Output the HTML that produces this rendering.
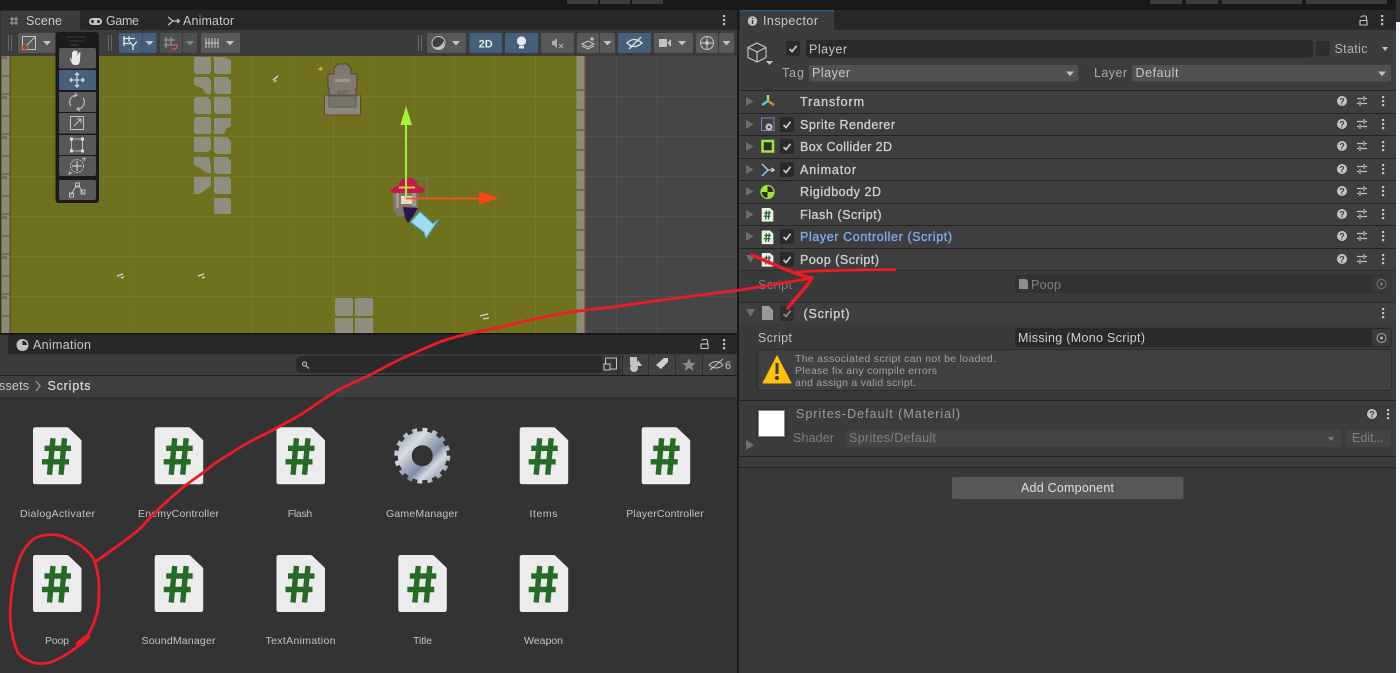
<!DOCTYPE html>
<html><head><meta charset="utf-8"><title>Unity Editor</title>
<style>
html,body{margin:0;padding:0;background:#333;width:1400px;height:673px;overflow:hidden}
svg{display:block}
text{font-family:"Liberation Sans",sans-serif;font-size:12.5px;fill:#c8c8c8}
.b{fill:#d0d0d0;stroke:#d0d0d0;stroke-width:.3px;font-size:12.5px}
.s{font-size:10.5px;fill:#c4c4c4;text-anchor:middle}
.d{fill:#8e8e8e}
</style></head><body>
<svg width="1400" height="673" viewBox="0 0 1400 673" xmlns="http://www.w3.org/2000/svg">
<defs>
<g id="file"><path d="M2.500 0H33.500Q35 0 36 1L47.500 12Q48.500 13 48.500 14V54.500Q48.500 57 46 57H2.500Q0 57 0 54.500V2.500Q0 0 2.500 0Z" fill="#ececec"/><path d="M20 11L16.500 47.500M31.500 11L28 47.500M11.500 21H38M9 34.500H36" stroke="#256b27" stroke-width="5.400" fill="none"/></g>
<g id="tri"><path d="M0 .5L7.500 5L0 9.500Z" fill="#6e6e6e"/></g>
<g id="chk"><rect x="0" y="0" width="14" height="15" rx="2" fill="#2a2a2a"/><path d="M3.500 8L6 10.500L10.500 4.800" stroke="#c6c6c6" stroke-width="1.800" fill="none"/></g>
<g id="q"><circle cx="5" cy="5" r="5" fill="#c4c4c4"/><text x="5" y="8.500" style="font-size:9px;font-weight:bold;fill:#3c3c3c;text-anchor:middle">?</text></g>
<g id="sl"><path d="M0 2.500H6M8 2.500H10M0 7.500H2M4 7.500H10M7 0V5M3 5V10" stroke="#c4c4c4" stroke-width="1.200" fill="none"/></g>
<g id="dots"><rect x="0" y="0" width="2.200" height="2.200" fill="#c4c4c4"/><rect x="0" y="4" width="2.200" height="2.200" fill="#c4c4c4"/><rect x="0" y="8" width="2.200" height="2.200" fill="#c4c4c4"/></g>
<g id="dn"><path d="M0 0H8L4 4.500Z" fill="#c4c4c4"/></g>
<g id="lock"><path d="M1 5.500V10H8V5.500ZM1.500 5.500H8M2 2.500Q2 1 4 1H6Q7.500 1 7.500 2.500V5.500" stroke="#c4c4c4" stroke-width="1.100" fill="none"/></g>
<g id="wall"><rect x="0" y="0" width="8" height="40" fill="#8b8a79"/><rect x="7.500" y="0" width="1.500" height="40" fill="#6e4a30"/><path d="M0 20H8M0 38H8" stroke="#6b5a49" stroke-width="1.200"/><rect x="0" y="0" width="5" height="3" fill="#6e6e5e"/></g>
<pattern id="grass" width="40" height="40" patternUnits="userSpaceOnUse" x="0" y="56"><path d="M38 8L41 13L43.500 8.500M18 30L19 34M6 22L7 25" stroke="#65671b" stroke-width="1.200" fill="none"/><path d="M37 8L39 10M44 7L43 9" stroke="#7b7d2a" stroke-width="1" fill="none"/></pattern>
<linearGradient id="steel" x1="0" y1="0" x2="1" y2="1"><stop offset="0" stop-color="#8c9ab0"/><stop offset=".3" stop-color="#d8dde4"/><stop offset=".45" stop-color="#a5afbf"/><stop offset=".6" stop-color="#7f8da5"/><stop offset=".72" stop-color="#d3d8df"/><stop offset="1" stop-color="#75849c"/></linearGradient>
</defs>

<rect width="1400" height="673" fill="#333"/>
<rect width="1400" height="10" fill="#191919"/>
<rect x="567" y="0" width="31" height="4" fill="#3c3c3c"/><rect x="600" y="0" width="30" height="4" fill="#3c3c3c"/><rect x="632" y="0" width="31" height="4" fill="#3c3c3c"/>
<rect x="1150" y="0" width="32" height="4" fill="#3c3c3c"/><rect x="1186" y="0" width="32" height="4" fill="#3c3c3c"/><rect x="1222" y="0" width="80" height="4" fill="#3c3c3c"/><rect x="1306" y="0" width="81" height="4" fill="#3c3c3c"/>

<!-- scene panel -->
<rect x="1" y="10" width="736" height="20" fill="#282828"/>
<path d="M1 30V13Q1 11 3 11H80V30Z" fill="#3c3c3c"/>
<rect x="1" y="30" width="736" height="26" fill="#3c3c3c"/>
<path d="M12 17V25M16 17V25M10 19H18M10 23H18" stroke="#a8a8a8" stroke-width="1" fill="none"/>
<text x="26" y="25" textLength="36">Scene</text>
<rect x="89" y="18" width="13" height="7" rx="3.500" fill="#c4c4c4"/><circle cx="92.500" cy="21.500" r="1.500" fill="#282828"/><circle cx="98.500" cy="21.500" r="1.500" fill="#282828"/>
<text x="106" y="25" textLength="33">Game</text>
<path d="M168 17L173 21H179M168 25L173 21M177 19L179.500 21L177 23" stroke="#c4c4c4" stroke-width="1.200" fill="none"/>
<text x="183" y="25" textLength="51">Animator</text>
<use href="#dots" x="723" y="15"/>

<!-- toolbar -->
<g fill="#585858">
<rect x="8" y="35" width="1" height="16" fill="#666"/><rect x="11" y="35" width="1" height="16" fill="#666"/>
<rect x="18" y="33" width="38" height="20" rx="2"/>
<rect x="108" y="35" width="1" height="16" fill="#666"/><rect x="111" y="35" width="1" height="16" fill="#666"/>
<rect x="119" y="33" width="23" height="20" rx="2" fill="#46607c"/><rect x="142.500" y="33" width="14" height="20" rx="2" fill="#46607c"/>
<rect x="160" y="33" width="22" height="20" rx="2" fill="#4f4f4f"/><rect x="183" y="33" width="14" height="20" rx="2" fill="#4f4f4f"/>
<rect x="201" y="33" width="39" height="20" rx="2"/>
<rect x="418" y="35" width="1" height="16" fill="#666"/><rect x="421" y="35" width="1" height="16" fill="#666"/>
<rect x="427" y="33" width="39" height="20" rx="2"/>
<rect x="469.500" y="33" width="32.500" height="20" rx="2" fill="#46607c"/>
<rect x="505" y="33" width="33" height="20" rx="2" fill="#46607c"/>
<rect x="541" y="33" width="33" height="20" rx="2"/>
<rect x="577" y="33" width="22" height="20" rx="2"/><rect x="600" y="33" width="15" height="20" rx="2"/>
<rect x="618" y="33" width="33" height="20" rx="2" fill="#46607c"/>
<rect x="654" y="33" width="39" height="20" rx="2"/>
<rect x="696" y="33" width="22" height="20" rx="2"/><rect x="719" y="33" width="15" height="20" rx="2"/>
</g>
<rect x="22.500" y="36.500" width="13" height="13" fill="none" stroke="#c4c4c4"/><path d="M24 48L35 37" stroke="#c4c4c4"/><circle cx="25" cy="47" r="2.800" fill="#585858" stroke="#e0603a" stroke-width="1.100"/>
<use href="#dn" x="43" y="41"/>
<path d="M124 36V46M129 36V42M123 38.500H135M123 43.500H130M130 42L133 46L137 41.500M133 46V50" stroke="#e6e6e6" stroke-width="1.300" fill="none"/>
<use href="#dn" x="145.500" y="41"/>
<path d="M166 37V48M171 37V46M164 40H175M164 45H170" stroke="#a5a5a5" stroke-width="1" fill="none"/><path d="M172 45H177Q178 48 175 49H172" stroke="#d2683a" stroke-width="1.300" fill="none"/>
<use href="#dn" x="186" y="41" opacity=".5"/>
<path d="M206 38V48M209 38V48M212 38V48M215 38V48M218 38V48M205 43H219" stroke="#c4c4c4" stroke-width="1" fill="none"/>
<use href="#dn" x="226" y="41"/>
<circle cx="438.500" cy="43" r="6.500" fill="#3f3f3f" stroke="#c4c4c4"/><path d="M433 46Q439 50 444 41Q445 49 438 49.500Q434 49 433 46Z" fill="#c4c4c4"/>
<use href="#dn" x="452" y="41"/>
<text x="485.700" y="47.500" style="font-size:11px;font-weight:bold;fill:#e6e6e6;text-anchor:middle">2D</text>
<circle cx="521.500" cy="41" r="4.600" fill="#e8e8e8"/><rect x="519" y="46" width="5" height="2.500" fill="#e8e8e8"/>
<path d="M552 41H554L557 38V48L554 45H552Z" fill="#b0b0b0"/><path d="M559 44L563 48M563 44L559 48" stroke="#b0b0b0"/>
<path d="M582 44L588 41L594 44L588 47Z M582 46L588 49L594 46" stroke="#c4c4c4" fill="none"/><path d="M592 37V41M590 39H594" stroke="#e0e0e0"/>
<use href="#dn" x="603.500" y="41"/>
<path d="M627 43Q634 36 642 43Q634 50 627 43Z" fill="none" stroke="#e6e6e6" stroke-width="1.300"/><path d="M629 49L641 37" stroke="#e6e6e6" stroke-width="1.300"/>
<rect x="659" y="39" width="8" height="8" fill="#c4c4c4"/><path d="M668 42L671 39V47L668 44Z" fill="#c4c4c4"/>
<use href="#dn" x="678" y="41"/>
<circle cx="707" cy="43" r="6.500" fill="none" stroke="#c4c4c4"/><path d="M700.500 43H713.500M707 36.500V49.500" stroke="#c4c4c4"/><circle cx="707" cy="43" r="2" fill="#c4c4c4"/>
<use href="#dn" x="722.500" y="41"/>

<!-- scene view -->
<rect x="1" y="56" width="736" height="277" fill="#464646"/>
<rect x="1" y="56" width="576" height="277" fill="#6f711e"/>
<rect x="1" y="56" width="576" height="277" fill="url(#grass)"/>
<g fill="#8f8e7e">
<path d="M195 57h15l1 1v14l-2 2h-13l-2-2v-14zM194 77h14l3 3v14h-5l-4-6-8-3zM196 97h11l4 4v13h-15l-2-2v-13zM196 117h13l2 2v15h-15l-2-2v-13zM194 137h15l2 2v10l-4 3h-13zM194 157h15l2 10v7l-6-2-5-4-6-3zM194 177h17v9l-7 5-4 3h-6z"/>
<path d="M214 57h10l7 3v14h-15l-2-2zM214 77h13l4 4v13h-15l-2-2zM214 97h15l2 2v15h-15l-2-2zM214 118h17v8l-5 3-2 5h-10zM214 137h13l4 5v12h-15l-2-2zM214 157h13l4 4v13h-15l-2-2zM214 177h15l2 2v15h-15l-2-2zM214 198h15l2 2v14h-17z"/>
<rect x="335" y="298" width="18" height="18" rx="2"/><rect x="355" y="298" width="18" height="18" rx="2"/><rect x="335" y="318" width="18" height="15"/><rect x="355" y="318" width="18" height="15"/>
</g>
<use href="#wall" x="2" y="56"/><use href="#wall" x="2" y="96"/><use href="#wall" x="2" y="136"/><use href="#wall" x="2" y="176"/><use href="#wall" x="2" y="216"/><use href="#wall" x="2" y="256"/><use href="#wall" x="2" y="296"/>
<g transform="translate(576.500 0)"><rect x="0" y="56" width="8" height="277" fill="#8b8a79"/><rect x="8" y="56" width="1.500" height="277" fill="#6e4a30"/><path d="M0 90H8M0 110H8M0 130H8M0 150H8M0 170H8M0 190H8M0 210H8M0 230H8M0 250H8M0 270H8M0 290H8M0 310H8" stroke="#63493a" stroke-width="1"/></g>
<g stroke="#fff" stroke-opacity=".055" stroke-width="1"><path d="M1 96.500H737M1 136.500H737M1 176.500H737M1 216.500H737M1 256.500H737M1 296.500H737"/><path d="M131 56V333M252.500 56V333M293 56V333M333.500 56V333M374 56V333M414.500 56V333M454.500 56V333M495 56V333M535.500 56V333M616.500 56V333M657 56V333"/></g>
<!-- grave -->
<path d="M328 74h6v-6l4-4h9l4 4v6h6v14h-1v8h-27v-8h-1z" fill="#7e7a70" stroke="#5e3f2a"/>
<rect x="324.500" y="95" width="36" height="20" fill="#8b877b" stroke="#6a4630"/>
<rect x="329" y="96" width="27" height="11" fill="#787469" stroke="#5c5a4e"/>
<rect x="335" y="79" width="15" height="3" fill="#9c988c"/>
<text x="343" y="95" style="font-size:7px;fill:#5c5a50;text-anchor:middle">RIP</text>
<path d="M318 69H323M320.500 67V71" stroke="#d9a43c" stroke-width="1.500"/>
<path d="M273 80L278 76M274 82L276 80" stroke="#ccc" stroke-width="1.500"/>
<path d="M117 276L123 274M121 278L124 277M198 276L204 274M202 278L205 277M480 316L488 314M483 319L489 318" stroke="#c9c9c0" stroke-width="1.500"/>
<!-- character -->
<rect x="412.500" y="178.500" width="14.500" height="20" fill="none" stroke="#6583a0" stroke-opacity=".7"/>
<path d="M393 192H418V210L414 216H397L393 210Z" fill="#7f7868"/>
<rect x="401" y="196" width="13" height="8" fill="#e9d7ca"/>
<path d="M396 192H399V208H396ZM412 192H416V206H412Z" fill="#a09a8c"/>
<path d="M390 190Q394 187 398 186Q400 179 406 178H413Q417 181 418 186Q423 187 425 191Q422 194 416 193H396Q391 193 390 190Z" fill="#c5184f"/>
<path d="M399 187.500H415" stroke="#e8d034" stroke-width="2"/>
<path d="M403 207L418 208L414 215L408 223L405 218Z" fill="#2b1450"/>
<path d="M411 222L420 212L433 224L438 220L426 238L424 232Z" fill="#a1dcec" stroke="#41c2e8"/>
<!-- gizmo -->
<path d="M406 198V120" stroke="#9bf03d" stroke-width="2"/><path d="M406 106L400.500 125H412Z" fill="#a0f83c"/>
<path d="M406 198.500H482" stroke="#ee5a1c" stroke-width="1.800"/><path d="M479 191.500V205L499 198Z" fill="#fa4613"/>

<!-- overlay tools -->
<rect x="55.500" y="32" width="43.500" height="171" rx="3" fill="#1b1b1b"/>
<path d="M66 37H86M68 41H84M70 45H78" stroke="#3d3d3d" stroke-width="1"/>
<g fill="#585858">
<rect x="59" y="48" width="37" height="20.500" rx="2"/><rect x="59" y="70" width="37" height="20" fill="#46607c"/><rect x="59" y="92" width="37" height="20"/><rect x="59" y="113" width="37" height="20.500"/><rect x="59" y="135" width="37" height="20"/><rect x="59" y="156" width="37" height="20" rx="2"/><rect x="59" y="180" width="37" height="20" rx="2"/>
</g>
<path d="M71 57L72 62V52H73.500V56V50.500H75.500V56V51H77.500V56L79 52.500H80.500L80 60Q80 65 76 65H74Q72 65 70 59Z" fill="#e8e8e8"/>
<path d="M77 73V87M70 80H84M75 75L77 73L79 75M75 85L77 87L79 85M72 78L70 80L72 82M82 78L84 80L82 82" stroke="#e6e6e6" stroke-width="1.100" fill="none"/>
<path d="M71 106A7 7 0 0 1 76 95M83 98A7 7 0 0 1 78 109M75 93L77 95L74 97M79 107L77 109L80 111" stroke="#c0c0c0" stroke-width="1.100" fill="none"/>
<rect x="70.500" y="116.500" width="13" height="13" fill="none" stroke="#c4c4c4"/><path d="M74 126L81 119M77 119H81V123" stroke="#c4c4c4" fill="none"/>
<rect x="71.500" y="139" width="11" height="12" fill="none" stroke="#b8b8b8"/><g fill="#e0e0e0"><rect x="70" y="137.500" width="3" height="3"/><rect x="81" y="137.500" width="3" height="3"/><rect x="70" y="149.500" width="3" height="3"/><rect x="81" y="149.500" width="3" height="3"/></g>
<circle cx="77" cy="166" r="6.500" fill="none" stroke="#c4c4c4" stroke-dasharray="2 1"/><path d="M77 161V171M72 166H82" stroke="#e0e0e0"/><path d="M82 159L85 158L84 161M72 173L69 174L70 171" stroke="#c4c4c4" fill="none"/>
<path d="M71 195L76 186H79L83 193" stroke="#c4c4c4" fill="none"/><rect x="69.500" y="193" width="4" height="4" fill="none" stroke="#c4c4c4"/><rect x="75.500" y="183" width="4" height="4" fill="none" stroke="#c4c4c4"/><rect x="81" y="190" width="4" height="4" fill="none" stroke="#c4c4c4"/>

<!-- project panel -->
<rect x="0" y="333" width="737" height="2" fill="#191919"/>
<rect x="0" y="335" width="737" height="19" fill="#282828"/>
<rect x="0" y="335" width="8" height="19" fill="#3c3c3c"/>
<circle cx="22.500" cy="345" r="6" fill="#c4c4c4"/><path d="M22.500 345V340.500A4.500 4.500 0 0 1 27 345Z" fill="#282828"/>
<text x="33" y="349" textLength="58">Animation</text>
<use href="#lock" x="700" y="338.500"/>
<use href="#dots" x="723" y="339"/>
<rect x="0" y="354" width="737" height="21" fill="#3c3c3c"/>
<rect x="0" y="375" width="737" height="1" fill="#1c1c1c"/>
<rect x="296" y="356" width="324" height="17" rx="5" fill="#2a2a2a"/>
<circle cx="304.500" cy="364" r="2" fill="none" stroke="#b0b0b0" stroke-width="1.200"/><path d="M306 366L309 368.500" stroke="#b0b0b0" stroke-width="1.300"/>
<rect x="602" y="356" width="18" height="17" fill="#343434"/><rect x="605.500" y="358" width="11" height="11" fill="none" stroke="#c4c4c4"/><rect x="604" y="364" width="6" height="6" fill="#343434" stroke="#c4c4c4"/>
<g fill="#414141"><rect x="623" y="355" width="25" height="20"/><rect x="649" y="355" width="26" height="20"/><rect x="676" y="355" width="26" height="20"/><rect x="703" y="355" width="32" height="20"/></g>
<g fill="#2c2c2c"><rect x="622" y="355" width="1" height="20"/><rect x="648" y="355" width="1" height="20"/><rect x="675" y="355" width="1" height="20"/><rect x="702" y="355" width="1" height="20"/></g>
<rect x="630" y="357" width="7" height="8" fill="#c4c4c4"/><circle cx="634" cy="368" r="4" fill="#c4c4c4"/><path d="M638 360L642 366H636Z" fill="#c4c4c4"/>
<path d="M656 365L664 358H668V362L661 369Z" fill="#d0d0d0"/>
<path d="M689 358L691 363H696L692 366L693.500 371L689 368L684.500 371L686 366L682 363H687Z" fill="#8a8a8a"/>
<path d="M709 365Q716 358 723 365Q716 371 709 365Z" fill="none" stroke="#c4c4c4"/><path d="M710 370L723 359" stroke="#c4c4c4"/>
<text x="725" y="369" style="font-size:11px">6</text>
<rect x="0" y="376" width="737" height="21" fill="#3e3e3e"/>
<text x="-1" y="390" textLength="30">ssets</text>
<path d="M36 381L40 386L36 391" stroke="#8a8a8a" stroke-width="1.500" fill="none"/>
<text class="b" x="47.500" y="390" textLength="43">Scripts</text>

<!-- files -->
<use href="#file" x="33" y="427.300"/><use href="#file" x="154.700" y="427.300"/><use href="#file" x="276.500" y="427.300"/><use href="#file" x="519.700" y="427.300"/><use href="#file" x="641.700" y="427.300"/>
<use href="#file" x="33" y="555"/><use href="#file" x="154.700" y="555"/><use href="#file" x="276.500" y="555"/><use href="#file" x="398.300" y="555"/><use href="#file" x="519.700" y="555"/>
<circle cx="422.300" cy="455.700" r="26" fill="none" stroke="url(#steel)" stroke-width="4" stroke-dasharray="5 5.200"/>
<circle cx="422.300" cy="455.700" r="24.500" fill="url(#steel)"/>
<circle cx="422.300" cy="455.700" r="10.500" fill="#333"/>
<text class="s" x="57.500" y="517" textLength="75">DialogActivater</text>
<text class="s" x="178.500" y="517" textLength="81">EnemyController</text>
<text class="s" x="300" y="517" textLength="24.500">Flash</text>
<text class="s" x="422" y="517" textLength="72">GameManager</text>
<text class="s" x="543.500" y="517" textLength="28">Items</text>
<text class="s" x="665" y="517" textLength="77.500">PlayerController</text>
<text class="s" x="57" y="644" textLength="24">Poop</text>
<text class="s" x="178.500" y="644" textLength="74">SoundManager</text>
<text class="s" x="300.500" y="644" textLength="70">TextAnimation</text>
<text class="s" x="422.500" y="644" textLength="19">Title</text>
<text class="s" x="543.500" y="644" textLength="39">Weapon</text>

<!-- separator -->
<rect x="737" y="10" width="2" height="663" fill="#191919"/>

<!-- inspector -->
<rect x="739" y="10" width="657" height="663" fill="#383838"/>
<rect x="739" y="10" width="657" height="20" fill="#282828"/>
<rect x="740" y="11" width="94" height="19" fill="#3c3c3c"/>
<rect x="740" y="10" width="94" height="1.500" fill="#2c5d87"/>
<circle cx="752.500" cy="21" r="4.700" fill="#c4c4c4"/><rect x="751.800" y="20" width="1.500" height="4" fill="#3c3c3c"/><rect x="751.800" y="17.700" width="1.500" height="1.300" fill="#3c3c3c"/>
<text x="763" y="25" textLength="55">Inspector</text>
<use href="#lock" x="1359" y="15"/>
<use href="#dots" x="1381" y="15"/>
<rect x="739" y="30" width="657" height="60" fill="#3c3c3c"/>
<path d="M757 43L766 47.500V57.500L757 62L748 57.500V47.500ZM748 47.500L757 52L766 47.500M757 52V62" fill="none" stroke="#c8c8c8" stroke-width="1.100"/>
<path d="M766 61H773L769.500 65Z" fill="#c4c4c4"/>
<use href="#chk" x="786" y="41"/>
<rect x="806" y="40" width="507" height="17.500" rx="3" fill="#2a2a2a"/>
<text x="809" y="53.500" textLength="38">Player</text>
<rect x="1316" y="41" width="14" height="15" rx="2" fill="#2e2e2e"/>
<text x="1334.500" y="53" class="d" style="fill:#b0b0b0" textLength="33">Static</text>
<path d="M1382 47H1388L1385 51Z" fill="#c4c4c4"/>
<text x="782" y="77" style="fill:#aaa" textLength="22">Tag</text>
<rect x="809" y="65" width="269" height="16.500" rx="2" fill="#515151"/>
<text x="812" y="77" textLength="38">Player</text>
<use href="#dn" x="1066" y="71.500"/>
<text x="1094" y="77" style="fill:#aaa" textLength="33">Layer</text>
<rect x="1132" y="65" width="259" height="16.500" rx="2" fill="#515151"/>
<text x="1135.500" y="77" textLength="43">Default</text>
<use href="#dn" x="1378" y="71.500"/>

<!-- rows -->
<rect x="739" y="91" width="657" height="179" fill="#3e3e3e"/>
<g fill="#232323"><rect x="739" y="90" width="657" height="1"/><rect x="739" y="113" width="657" height="1"/><rect x="739" y="135" width="657" height="1"/><rect x="739" y="158" width="657" height="1"/><rect x="739" y="180" width="657" height="1"/><rect x="739" y="203" width="657" height="1"/><rect x="739" y="225" width="657" height="1"/><rect x="739" y="248" width="657" height="1"/></g>
<rect x="739" y="270" width="657" height="1" fill="#2c2c2c"/>
<use href="#tri" x="746" y="96.500"/><use href="#tri" x="746" y="119.500"/><use href="#tri" x="746" y="141.500"/><use href="#tri" x="746" y="164.500"/><use href="#tri" x="746" y="186.500"/><use href="#tri" x="746" y="209.500"/><use href="#tri" x="746" y="231.500"/>
<path d="M746 255H755L750.500 263Z" fill="#6e6e6e"/>
<path d="M768 101V95" stroke="#a5e24a" stroke-width="2.500"/><path d="M768 101L774 105" stroke="#f0794a" stroke-width="2.500"/><path d="M768 101L762 105" stroke="#58c3e8" stroke-width="2.500"/>
<rect x="761.500" y="118" width="12.500" height="12.500" fill="none" stroke="#8a7bd8"/><circle cx="769" cy="127" r="3.500" fill="#c4c4c4"/><circle cx="769" cy="127" r="1.300" fill="#3e3e3e"/>
<rect x="762.500" y="141" width="10.500" height="10.500" fill="#2d2d2d" stroke="#9be83a" stroke-width="2.500"/>
<path d="M762 164L768 170H774M771.500 168L774 170L771.500 172" stroke="#d0d0d0" stroke-width="1.300" fill="none"/><path d="M762 176L768 170" stroke="#5cc8e8" stroke-width="1.700"/>
<circle cx="767.500" cy="192" r="6.500" fill="#2d2d2d" stroke="#9be83a" stroke-width="1.300"/><path d="M767.500 185.500V192H761A6.500 6.500 0 0 1 767.500 185.500ZM767.500 192H774A6.500 6.500 0 0 1 767.500 198.500Z" fill="#9be83a"/>
<use href="#file" transform="translate(761.700 208) scale(.24)"/>
<use href="#file" transform="translate(761.700 230.500) scale(.24)"/>
<use href="#file" transform="translate(761.700 253) scale(.24)"/>
<use href="#chk" x="780" y="117"/><use href="#chk" x="780" y="139"/><use href="#chk" x="780" y="162"/><use href="#chk" x="780" y="229"/><use href="#chk" x="780" y="252"/>
<text class="b" x="800" y="106" textLength="64">Transform</text>
<text class="b" x="800" y="129" textLength="95">Sprite Renderer</text>
<text class="b" x="800" y="151" textLength="92">Box Collider 2D</text>
<text class="b" x="800" y="174" textLength="56">Animator</text>
<text class="b" x="800" y="196" textLength="81">Rigidbody 2D</text>
<text class="b" x="800" y="219" textLength="81.500">Flash (Script)</text>
<text class="b" x="800" y="241" textLength="152" style="fill:#7bafef;stroke:#7bafef">Player Controller (Script)</text>
<text class="b" x="800" y="264" textLength="79">Poop (Script)</text>
<use href="#q" x="1337" y="96"/><use href="#q" x="1337" y="119"/><use href="#q" x="1337" y="141"/><use href="#q" x="1337" y="164"/><use href="#q" x="1337" y="186"/><use href="#q" x="1337" y="209"/><use href="#q" x="1337" y="231"/><use href="#q" x="1337" y="254"/>
<use href="#sl" x="1357" y="96"/><use href="#sl" x="1357" y="119"/><use href="#sl" x="1357" y="141"/><use href="#sl" x="1357" y="164"/><use href="#sl" x="1357" y="186"/><use href="#sl" x="1357" y="209"/><use href="#sl" x="1357" y="231"/><use href="#sl" x="1357" y="254"/>
<use href="#dots" x="1382" y="96"/><use href="#dots" x="1382" y="119"/><use href="#dots" x="1382" y="141"/><use href="#dots" x="1382" y="164"/><use href="#dots" x="1382" y="186"/><use href="#dots" x="1382" y="209"/><use href="#dots" x="1382" y="231"/><use href="#dots" x="1382" y="254"/>

<!-- poop body -->
<rect x="739" y="271" width="657" height="31" fill="#3a3a3a"/>
<text x="758" y="289" style="fill:#7e7e7e" textLength="34">Script</text>
<rect x="1015" y="275" width="377" height="18" rx="3" fill="#323232"/>
<rect x="1372" y="276" width="19" height="16" fill="#393939"/><circle cx="1381.500" cy="284" r="4.500" fill="none" stroke="#777"/><circle cx="1381.500" cy="284" r="1.500" fill="#777"/>
<path d="M1019 279H1026L1028 281V289H1019Z" fill="#8f8f8f"/>
<text x="1031" y="289" style="fill:#808080" textLength="30">Poop</text>
<rect x="739" y="302" width="657" height="1" fill="#2c2c2c"/>
<rect x="739" y="303" width="657" height="20" fill="#3e3e3e"/>
<path d="M746 309H755L750.500 317Z" fill="#6e6e6e"/>
<path d="M762 306H769L773 310V320H762Z" fill="#9a9a9a"/>
<rect x="780" y="306" width="14" height="15" rx="2" fill="#2f2f2f"/><path d="M783.500 314L786 316.500L790.500 310.800" stroke="#8a8a8a" stroke-width="1.800" fill="none"/>
<text class="b" x="803.500" y="318" textLength="46">(Script)</text>
<use href="#dots" x="1382" y="308"/>
<rect x="739" y="323" width="657" height="77" fill="#3a3a3a"/>
<text x="758" y="342" style="fill:#c0c0c0" textLength="34">Script</text>
<rect x="1015" y="328" width="377" height="19" rx="3" fill="#2a2a2a"/>
<rect x="1372" y="329" width="19" height="17" fill="#3a3a3a"/><circle cx="1381.500" cy="338" r="4.500" fill="none" stroke="#aaa"/><circle cx="1381.500" cy="338" r="1.500" fill="#aaa"/>
<text x="1018" y="342" style="fill:#d0d0d0" textLength="127">Missing (Mono Script)</text>
<rect x="757.500" y="349.500" width="634" height="41" rx="3" fill="#404040" stroke="#2c2c2c"/>
<path d="M777 356L791 383H763Z" fill="#ffc107" stroke="#ffc107" stroke-width="1" stroke-linejoin="round"/>
<rect x="775.500" y="363" width="3" height="11" fill="#3c3c3c"/><circle cx="777" cy="378" r="2" fill="#3c3c3c"/>
<text x="795" y="362" style="font-size:10.5px;fill:#a2a2a2" textLength="201">The associated script can not be loaded.</text>
<text x="795" y="374" style="font-size:10.5px;fill:#a2a2a2" textLength="142">Please fix any compile errors</text>
<text x="795" y="386" style="font-size:10.5px;fill:#a2a2a2" textLength="121">and assign a valid script.</text>
<rect x="739" y="400" width="657" height="1" fill="#232323"/>
<rect x="739" y="401" width="657" height="55" fill="#3c3c3c"/>
<rect x="756" y="408" width="31" height="31" fill="#353535"/>
<rect x="758.500" y="410.500" width="26" height="26" fill="#fff" stroke="#8a8a8a"/>
<path d="M746 440L754 445L746 450Z" fill="#6e6e6e"/>
<text x="796" y="418" style="fill:#9e9e9e" textLength="164">Sprites-Default (Material)</text>
<text x="793" y="442" style="fill:#7e7e7e" textLength="41">Shader</text>
<rect x="846" y="430" width="495" height="17" rx="2" fill="#444"/>
<text x="849" y="442" style="fill:#808080" textLength="87">Sprites/Default</text>
<path d="M1328 437H1334L1331 441Z" fill="#7a7a7a"/>
<rect x="1346" y="430" width="45" height="17" rx="2" fill="#444"/>
<text x="1352" y="442" style="fill:#808080" textLength="32">Edit...</text>
<use href="#q" x="1367" y="409"/><use href="#dots" x="1387" y="409"/>
<rect x="739" y="456" width="657" height="1" fill="#232323"/>
<rect x="739" y="457" width="657" height="10" fill="#3c3c3c"/>
<rect x="739" y="467" width="657" height="1" fill="#232323"/>
<rect x="952" y="477" width="231.500" height="22" rx="2" fill="#585858"/>
<text x="1067.500" y="492" style="text-anchor:middle;fill:#e0e0e0" textLength="93">Add Component</text>

<!-- window edge -->
<rect x="1396" y="0" width="4" height="22" fill="#333"/>
<rect x="1396" y="22" width="4" height="651" fill="#f3f6fb"/>

<!-- red annotations -->
<g fill="none" stroke="#ec1c24" stroke-linecap="round" stroke-linejoin="round">
<path stroke-width="2.800" d="M95 562C105 555 115 548 123 542C132 535 141 529 147 521C157 510 168 500 180 490C187 484 194 479 200 475C212 465 222 458 233 452C241 446 249 442 257 438C272 431 286 423 300 415C311 408 322 400 333 393C345 386 357 381 370 375C381 369 392 363 403 358C414 353 426 348 437 343C453 337 470 333 487 330C515 324 535 318 560 314C580 310 600 309 620 306C660 300 700 295 740 290C765 286 790 282 812 278"/>
<path stroke-width="3.400" d="M752 255C768 262 782 268 795 273C800 275 806 277 812 278C808 285 802 291 798 296C794 300 791 304 788 308"/>
<path stroke-width="2.800" d="M795 272C830 270 862 270 895 269.500"/>
<path stroke-width="2.800" d="M88 635L77 643.500L89 636.500C85 642 78 646 70 652C64 656 57 660 50 662.500C44 664 38 664 33 662.500C26 660 21 657 18 653C15 646 13 640 12 633C9 620 10 606 11.700 593C13 580 16 568 20 557C24 549 29 542 35 538C42 535 50 534 58 535C66 537 73 541 80 545C85 549 90 553 93 558C97 567 99 577 99 587C99 596 99 605 97 613C95 621 92 628 88 635"/>
</g>
</svg>
</body></html>
